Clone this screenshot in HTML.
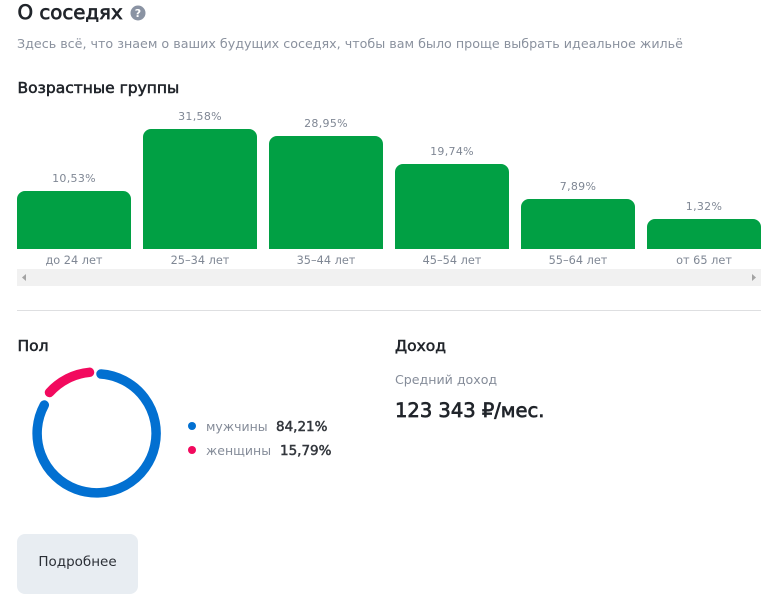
<!DOCTYPE html>
<html lang="ru"><head><meta charset="utf-8"><style>
html,body{margin:0;padding:0;background:#fff}
body{width:772px;height:585px;position:relative;overflow:hidden;font-family:"DejaVu Sans","Liberation Sans",sans-serif;color:#21252b}
.a{position:absolute;white-space:nowrap}
.bar{position:absolute;width:114px;background:#01a044;border-radius:8px 8px 0 0}
.v,.l{position:absolute;width:114px;text-align:center;font-size:11.300px;line-height:14px;color:#7f8794;white-space:nowrap}
.v{font-size:11px;letter-spacing:.3px}
.h{font-size:15.500px;line-height:20px;-webkit-text-stroke:.55px #21252b}
</style></head><body>
<div class="a" style="left:17.500px;top:0;font-size:19.800px;line-height:26px;-webkit-text-stroke:.7px #21252b">О соседях</div>
<svg class="a" style="left:130px;top:5px" width="16" height="16" viewBox="0 0 16 16"><circle cx="8" cy="8" r="7.500" fill="#8a93a3"/><text x="8" y="12" text-anchor="middle" font-size="11" font-weight="700" fill="#fff" font-family="DejaVu Sans">?</text></svg>
<div class="a" style="left:17px;top:35px;font-size:12.700px;line-height:17px;color:#8a919e">Здесь всё, что знаем о ваших будущих соседях, чтобы вам было проще выбрать идеальное жильё</div>
<div class="a h" style="left:17.500px;top:78px">Возрастные группы</div>

<div class="v" style="left:17px;top:172px">10,53%</div><div class="bar" style="left:17px;top:191px;height:58px"></div><div class="l" style="left:17px;top:254px">до 24 лет</div>
<div class="v" style="left:143px;top:110px">31,58%</div><div class="bar" style="left:143px;top:129px;height:120px"></div><div class="l" style="left:143px;top:254px">25–34 лет</div>
<div class="v" style="left:269px;top:117px">28,95%</div><div class="bar" style="left:269px;top:136px;height:113px"></div><div class="l" style="left:269px;top:254px">35–44 лет</div>
<div class="v" style="left:395px;top:145px">19,74%</div><div class="bar" style="left:395px;top:164px;height:85px"></div><div class="l" style="left:395px;top:254px">45–54 лет</div>
<div class="v" style="left:521px;top:180px">7,89%</div><div class="bar" style="left:521px;top:199px;height:50px"></div><div class="l" style="left:521px;top:254px">55–64 лет</div>
<div class="v" style="left:647px;top:200px">1,32%</div><div class="bar" style="left:647px;top:219px;height:30px"></div><div class="l" style="left:647px;top:254px">от 65 лет</div>

<div class="a" style="left:17px;top:269px;width:744px;height:17px;background:#f1f1f1"></div>
<svg class="a" style="left:17px;top:269px" width="744" height="17"><path d="M9 5v7L5 8.500z" fill="#a3a3a3"/><path d="M735 5v7l4-3.500z" fill="#a3a3a3"/></svg>
<div class="a" style="left:17px;top:310px;width:744px;height:1px;background:#dedfe1"></div>

<div class="a h" style="left:17.500px;top:336px">Пол</div>
<div class="a h" style="left:395px;top:336px">Доход</div>
<div class="a" style="left:395px;top:371px;font-size:12.600px;line-height:18px;color:#858c99">Средний доход</div>
<div class="a" style="left:395px;top:398px;font-size:19.500px;line-height:26px;-webkit-text-stroke:.7px #21252b">123 343 ₽/мес.</div>

<svg class="a" style="left:0;top:360px" width="180" height="150" fill="none" stroke-width="9.500" stroke-linecap="round">
<path d="M101 14A59.500 59.500 0 1 1 44.300 45" stroke="#0270d1"/>
<path d="M49.500 32.500A61 61 0 0 1 89.500 12.300" stroke="#f20a5e"/>
</svg>

<div class="a" style="left:188px;top:422px;width:8px;height:8px;border-radius:50%;background:#0270d1"></div>
<div class="a" style="left:206px;top:418px;font-size:12.500px;line-height:18px;color:#858c99">мужчины</div>
<div class="a" style="left:276px;top:418px;font-size:13.500px;line-height:18px;color:#33373d;-webkit-text-stroke:.5px #33373d">84,21%</div>
<div class="a" style="left:188px;top:446px;width:8px;height:8px;border-radius:50%;background:#f20a5e"></div>
<div class="a" style="left:206px;top:442px;font-size:12.500px;line-height:18px;color:#858c99">женщины</div>
<div class="a" style="left:280px;top:442px;font-size:13.500px;line-height:18px;color:#33373d;-webkit-text-stroke:.5px #33373d">15,79%</div>

<div class="a" style="left:17px;top:534px;width:121px;height:60px;border-radius:8px;background:#e8edf2;text-align:center;font-size:13.500px;line-height:56px;color:#2b2f36">Подробнее</div>
</body></html>
